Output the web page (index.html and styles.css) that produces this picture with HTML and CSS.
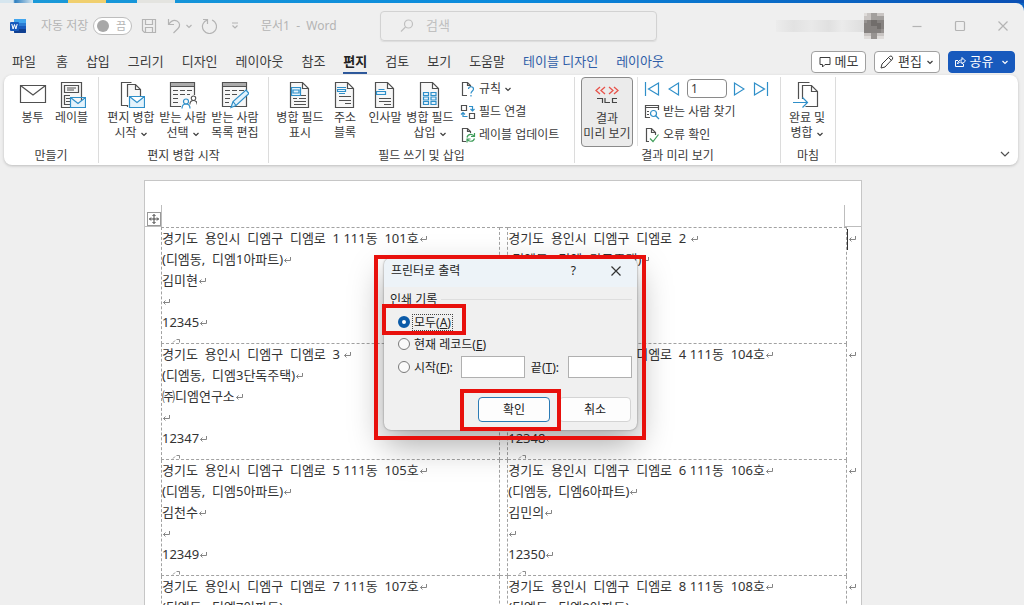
FILE: index.html
```html
<!DOCTYPE html>
<html lang="ko">
<head>
<meta charset="utf-8">
<meta name="viewport" content="width=device-width, initial-scale=1">
<title>문서1 - Word</title>
<link rel="stylesheet" href="styles.css">
</head>
<body>
<svg class="defs" aria-hidden="true">
  <symbol id="ret" viewBox="0 0 9 9"><path d="M7.500 1v3.500h-6M3.500 2.500l-2 2 2 2" fill="none" stroke="#858585"/></symbol>
  <symbol id="retcut" viewBox="0 0 9 5"><path d="M1 4.500l2-2M4.500 1.500h3v3" fill="none" stroke="#8d8d8d"/></symbol>
  <symbol id="chev" viewBox="0 0 8 8"><path d="M1.500 3l2.500 2.500L6.500 3" fill="none" stroke="currentColor" stroke-width="1.200"/></symbol>
  <symbol id="person" viewBox="0 0 10 11"><circle cx="5" cy="3.500" r="2.500"/><path d="M1 10.500c0-3 1.500-4.500 4-4.500s4 1.500 4 4.500"/></symbol>
</svg>

<div class="desktop"><span class="d1"></span><span class="d2"></span><span class="d3"></span></div>

<div class="app">
<header class="titlebar">
  <div class="quick">
    <svg class="logo" viewBox="0 0 16 16" width="16" height="16"><rect x="4" y="1" width="12" height="14" rx="1" fill="#2b7cd3"/><rect x="4" y="1" width="12" height="4" fill="#41a5ee"/><rect x="4" y="8" width="12" height="4" fill="#185abd"/><rect x="4" y="11" width="12" height="4" rx="1" fill="#103f91"/><rect y="4" width="9" height="9" rx="1" fill="#185abd"/><path d="M1.800 6l1.300 5 1.400-4.500L5.900 11l1.300-5" fill="none" stroke="#fff"/></svg>
    <label class="autosave" for="auto">자동 저장</label>
    <button class="switch" id="auto" type="button"><span class="knob"></span>끔</button>
    <button class="ico save" type="button" aria-label="저장"><svg viewBox="0 0 16 16" width="16" height="16"><path d="M1.500 1.500h13v13h-11l-2-2zM4.500 1.500v5h7v-5M4.500 14.500v-5h7v5"/></svg></button>
    <button class="ico undo" type="button" aria-label="실행 취소"><svg viewBox="0 0 14 16" width="14" height="16"><path d="M1.500 1v5.500H7M1.500 6.500C4 3 7 1.500 10 3c3 1.800 3.500 5 1 7.500L6.500 15"/></svg></button>
    <button class="ico uchev" type="button" aria-label="실행 취소 목록"><svg width="8" height="8"><use href="#chev"/></svg></button>
    <button class="ico redo" type="button" aria-label="다시 실행"><svg viewBox="0 0 16 16" width="16" height="16"><path d="M2 1.500h4.500V6M6.500 1.800A7 7 0 1 0 11 2"/></svg></button>
    <button class="ico more" type="button" aria-label="도구 모음 사용자 지정"><svg viewBox="0 0 8 8" width="8" height="8"><path d="M1 1h6M1.500 3.500L4 6l2.500-2.500"/></svg></button>
    <span class="docname">문서1&nbsp; -&nbsp; Word</span>
  </div>
  <div class="search">
    <svg viewBox="0 0 14 14" width="14" height="14"><circle cx="8.500" cy="5" r="4"/><path d="M5.500 8L1 12.500"/></svg>
    <input type="text" placeholder="검색" aria-label="검색">
  </div>
  <div class="win">
    <span class="username"></span>
    <svg class="avatar" viewBox="0 0 6 8" width="20" height="26" preserveAspectRatio="none" shape-rendering="crispEdges"><path fill="#c9c5c3" d="M0 0h6v8H0z"/><path fill="#a29f9d" d="M2 0h2v2H2zM4 1h2v1H4z"/><path fill="#868280" d="M0 2h6v4H0z"/><path fill="#716d6b" d="M2 2h2v2H2zM4 3h1v2H4z"/><path fill="#979391" d="M0 2h1v1H0zM5 5h1v1H5zM2 6h2v2H2z"/><path fill="#dfdcda" d="M0 0h1v1H0zM0 7h2v1H0zM4 7h2v1H4z"/></svg>
    <button class="ico wmin" type="button" aria-label="최소화"><svg viewBox="0 0 12 12" width="12" height="12"><path d="M1.500 6.500h9"/></svg></button>
    <button class="ico wmax" type="button" aria-label="최대화"><svg viewBox="0 0 12 12" width="12" height="12"><rect x="1.500" y="1.500" width="9" height="9" rx="1"/></svg></button>
    <button class="ico wcls" type="button" aria-label="닫기"><svg viewBox="0 0 12 12" width="12" height="12"><path d="M1.500 1.500l9 9M10.500 1.500l-9 9"/></svg></button>
  </div>
</header>

<nav class="tabs">
  <button class="tab file" type="button">파일</button><button class="tab" type="button">홈</button><button class="tab" type="button">삽입</button><button class="tab" type="button">그리기</button><button class="tab" type="button">디자인</button><button class="tab" type="button">레이아웃</button><button class="tab" type="button">참조</button><button class="tab on" type="button">편지</button><button class="tab" type="button">검토</button><button class="tab" type="button">보기</button><button class="tab" type="button">도움말</button><button class="tab ctx" type="button">테이블 디자인</button><button class="tab ctx" type="button">레이아웃</button>
  <div class="actions">
    <button class="act memo" type="button"><svg viewBox="0 0 12 12" width="12" height="12"><path d="M1 1.500h10v7H6L3.500 11V8.500H1z"/></svg>메모</button>
    <button class="act edit" type="button"><svg viewBox="0 0 14 14" width="14" height="14"><path d="M1 13l1-4L9.500 1.500q1.500-1 2.500 0t.5 2.500L5 12zM8.500 2.500l3 3"/></svg>편집<svg class="c" width="8" height="8"><use href="#chev"/></svg></button>
    <button class="act share" type="button"><svg viewBox="0 0 12 12" width="12" height="12"><path d="M4 4.500H1.500v6h8V8M3.500 8C4 5 5.500 4 8 4V1.500L11.500 5 8 8V6C6 6 4.500 6.500 3.500 8z"/></svg>공유<svg class="c" width="8" height="8"><use href="#chev"/></svg></button>
  </div>
</nav>

<section class="ribbon">
  <div class="group g1">
    <div class="tools">
      <button class="big w-m" type="button"><svg viewBox="0 0 28 28" width="28" height="28"><path class="k" d="M1.500 4.500h25v17h-25zM1.500 4.500L14 14 26.500 4.500"/></svg>봉투</button>
      <button class="big w-m" type="button"><svg viewBox="0 0 28 28" width="28" height="28"><path class="k lite" d="M3.500 1.500h20v25h-20z"/><path class="k" d="M6.500 4.500h14v7h-14zM9 7h9M9 9h7M12 14.500H6.500v9H12M8 17.500h4M8 20.500h4"/><path class="b bf" d="M12.500 16.500h15v10h-15zM12.500 16.500l7.500 6 7.500-6"/></svg>레이블</button>
    </div>
    <div class="gname">만들기</div>
  </div>
  <div class="group g2">
    <div class="tools">
      <button class="big w-l" type="button"><svg viewBox="0 0 28 28" width="28" height="28"><path class="k" d="M10 24.500H4.500v-23h10"/><path class="k lite" d="M10.500 16V3.500h8l5 5V16M18.500 3.500v5h5M10.500 24v2"/><path class="b bf" d="M12.500 15.500h15v11h-15zM12.500 15.500l7.500 6 7.500-6"/></svg><span>편지 병합<br>시작<svg class="c" width="8" height="8"><use href="#chev"/></svg></span></button>
      <button class="big w-l" type="button"><svg viewBox="0 0 28 28" width="28" height="28"><path class="k lite" d="M12 25.500H1.500v-24h24V14"/><path fill="#aaa" d="M2 2h23v3H2z"/><path class="k" d="M1.500 5.500h24M4 9.500h5M11 9.500h5M18 9.500h5M4 13.500h5M11 13.500h5M18 13.500h3M4 17.500h5M4 21.500h5"/><use href="#person" class="b" x="12" y="17" width="10" height="11"/><use href="#person" class="k" x="20" y="14" width="9" height="10"/></svg><span>받는 사람<br>선택<svg class="c" width="8" height="8"><use href="#chev"/></svg></span></button>
      <button class="big w-l" type="button"><svg viewBox="0 0 28 28" width="28" height="28"><path class="k lite" d="M1.500 1.500h24v24h-24z"/><path fill="#aaa" d="M2 2h23v3H2z"/><path class="k" d="M1.500 5.500h24M4 9.500h5M11 9.500h5M18 9.500h5M4 13.500h5M11 13.500h5M4 17.500h5M4 21.500h4"/><path class="b bf" d="M10 26.500l2-6L25 9l3 3.500-13 12zM12 20.500l3 4"/></svg><span>받는 사람<br>목록 편집</span></button>
    </div>
    <div class="gname">편지 병합 시작</div>
  </div>
  <div class="group g3">
    <div class="tools">
      <button class="big w-f1" type="button"><svg viewBox="0 0 28 28" width="28" height="28"><path class="k lite" d="M4.500 1.500h12l6 6v19h-18zM16.500 1.500v6h6"/><path class="k" d="M7 17.500h4M13 14.500h7M13 17.500h7M8 20.500h12M8 23.500h12"/><path class="b bf" d="M5.500 6.500h9v8h-9zM7 9h6v3H7z"/></svg><span>병합 필드<br>표시</span></button>
      <button class="big w-f2" type="button"><svg viewBox="0 0 28 28" width="28" height="28"><path class="k lite" d="M4.500 1.500h12l6 6v19h-18zM16.500 1.500v6h6"/><path class="k" d="M8 15.500h12M8 19.500h12M14 22.500h6"/><path class="b bf" d="M6 6.500h9M6.500 8.500h8v2h-8zM8 12.500h6"/></svg><span>주소<br>블록</span></button>
      <button class="big w-f3" type="button"><svg viewBox="0 0 28 28" width="28" height="28"><path class="k lite" d="M4.500 1.500h12l6 6v19h-18zM16.500 1.500v6h6"/><path class="k" d="M8 17.500h12M8 20.500h12M13 23.500h7"/><path class="b bf" d="M7.500 8.500h6M5.500 10.500h9v3h-9z"/></svg><span>인사말</span></button>
      <button class="big w-l" type="button"><svg viewBox="0 0 28 28" width="28" height="28"><path class="k lite" d="M4.500 1.500h12l6 6v19h-18zM16.500 1.500v6h6"/><path class="b bf" d="M7.500 11.500h5v3h-5zM15 11.500h5v3h-5zM7.500 16h5v3h-5zM15 16h5v3h-5zM7.500 20.500h5v3h-5zM15 20.500h5v3h-5z"/></svg><span>병합 필드<br>삽입<svg class="c" width="8" height="8"><use href="#chev"/></svg></span></button>
      <div class="list">
        <button class="small" type="button"><svg viewBox="0 0 16 16" width="16" height="16"><path class="k" d="M7 14.500H2.500v-13h5l3 3V6M7.500 1.500v3h3"/><path class="b" d="M8.500 8c0-3 5-3 5 0 0 2-2.500 2-2.500 4.500M11 14v1.500"/></svg>규칙<svg class="c" width="8" height="8"><use href="#chev"/></svg></button>
        <button class="small" type="button"><svg viewBox="0 0 16 16" width="16" height="16"><path class="k" d="M1.500 1.500h5v5h-5zM9.500 9.500h5v5h-5z"/><path class="b" d="M9 2.500h3.500V7M10.500 5l2 2 2-2M3 9v3.500h4.500M1 10.500l2-2 2 2"/></svg>필드 연결</button>
        <button class="small" type="button"><svg viewBox="0 0 16 16" width="16" height="16"><path class="k" d="M6 14.500H2.500v-13h5l3 3V6M7.500 1.500v3h3"/><path class="g" d="M7 10.500c1-4 6-4 7-1M14.500 6v3.500H11M14.500 11.500c-1 3.500-6 3.500-7 1M7 15.500V12h3.500"/></svg>레이블 업데이트</button>
      </div>
    </div>
    <div class="gname">필드 쓰기 및 삽입</div>
  </div>
  <div class="group g4">
    <div class="tools">
      <button class="big preview" type="button"><svg viewBox="0 0 28 28" width="28" height="28"><path d="M7 5L3 8.500 7 12M12 5L8 8.500 12 12M16 5l4 3.500-4 3.500M21 5l4 3.500-4 3.500" fill="none" stroke="#e8534b" stroke-width="1.300"/><path d="M4 16.500h5.500V21M12 16v4.500h5M24 16.500h-4.500v4H24" fill="none" stroke="#444" stroke-width="1.200"/></svg><span>결과<br>미리 보기</span></button>
      <div class="list records">
        <div class="nav">
          <button type="button" aria-label="처음"><svg viewBox="0 0 16 16" width="16" height="16"><path class="b" d="M1.500 1v14M14.500 2v12L4.500 8z"/></svg></button>
          <button class="n2" type="button" aria-label="이전"><svg viewBox="0 0 12 16" width="12" height="16"><path class="b" d="M10.500 2v12L1 8z"/></svg></button>
          <input type="text" value="1" aria-label="레코드">
          <button class="n3" type="button" aria-label="다음"><svg viewBox="0 0 12 16" width="12" height="16"><path class="b" d="M1.500 2v12L11 8z"/></svg></button>
          <button type="button" aria-label="마지막"><svg viewBox="0 0 16 16" width="16" height="16"><path class="b" d="M14.500 1v14M1.500 2v12L11.500 8z"/></svg></button>
        </div>
        <button class="small" type="button"><svg viewBox="0 0 16 16" width="16" height="16"><path class="k" d="M6 13.500H1.500v-12h13V6M1.500 3.500h13M3 7.500h2M3 10.500h2"/><circle class="b" cx="9.500" cy="9.500" r="3"/><path class="b" d="M11.500 11.500l3.500 3.500"/></svg>받는 사람 찾기</button>
        <button class="small" type="button"><svg viewBox="0 0 16 16" width="16" height="16"><path class="k" d="M5 14.500H2.500v-13h5l4 4V8M7.500 1.500v4h4"/><path class="g" d="M6 11.500l3 3 5.500-7"/></svg>오류 확인</button>
      </div>
    </div>
    <div class="gname">결과 미리 보기</div>
  </div>
  <div class="group g5">
    <div class="tools">
      <button class="big w-l" type="button"><svg viewBox="0 0 28 28" width="28" height="28"><path class="k" d="M5.500 18V1.500h11M9.500 18V4.500h9l6 6v15h-12M18.500 4.500v6h6"/><path class="b" d="M0 21.500h14M9.500 16.500l5 5-5 5"/></svg><span>완료 및<br>병합<svg class="c" width="8" height="8"><use href="#chev"/></svg></span></button>
    </div>
    <div class="gname">마침</div>
  </div>
  <button class="collapse" type="button" aria-label="리본 축소"><svg viewBox="0 0 10 10" width="10" height="10"><path class="k" d="M1 3l4 4 4-4"/></svg></button>
</section>

<main class="canvas">
  <div class="page">
    <div class="marks">
      <div class="corner left"><svg viewBox="0 0 14 14" width="14" height="14"><rect x=".5" y=".5" width="13" height="13" fill="#fff" stroke="#999"/><path d="M7 2.500v9M2.500 7h9M5.500 4L7 2.500 8.500 4M5.500 10L7 11.500 8.500 10M4 5.500L2.500 7 4 8.500M10 5.500L11.500 7 10 8.500" fill="none" stroke="#444"/></svg></div>
      <div class="corner right"></div>
    </div>
    <table class="labels">
      <tr>
        <td><div class="cell"><p>경기도  용인시  디엠구  디엠로  1 111동  101호<svg><use href="#ret"/></svg></p><p>(디엠동,  디엠1아파트)<svg><use href="#ret"/></svg></p><p>김미현<svg><use href="#ret"/></svg></p><p><svg><use href="#ret"/></svg></p><p>12345<svg><use href="#ret"/></svg></p><svg class="cut"><use href="#retcut"/></svg></div></td>
        <td class="gap"></td>
        <td><div class="cell"><p>경기도  용인시  디엠구  디엠로  2 <svg><use href="#ret"/></svg></p><p>(디엠동,  디엠2단독주택)<svg><use href="#ret"/></svg></p><p></p><p></p><p></p><svg class="cut"><use href="#retcut"/></svg></div></td>
        <td class="end caret"><svg><use href="#ret"/></svg></td>
      </tr>
      <tr>
        <td><div class="cell"><p>경기도  용인시  디엠구  디엠로  3 <svg><use href="#ret"/></svg></p><p>(디엠동,  디엠3단독주택)<svg><use href="#ret"/></svg></p><p>㈜디엠연구소<svg><use href="#ret"/></svg></p><p><svg><use href="#ret"/></svg></p><p>12347<svg><use href="#ret"/></svg></p><svg class="cut"><use href="#retcut"/></svg></div></td>
        <td class="gap"></td>
        <td><div class="cell"><p>경기도  용인시  디엠구  디엠로  4 111동  104호<svg><use href="#ret"/></svg></p><p></p><p></p><p></p><p>12348<svg><use href="#ret"/></svg></p><svg class="cut"><use href="#retcut"/></svg></div></td>
        <td class="end"><svg><use href="#ret"/></svg></td>
      </tr>
      <tr>
        <td><div class="cell"><p>경기도  용인시  디엠구  디엠로  5 111동  105호<svg><use href="#ret"/></svg></p><p>(디엠동,  디엠5아파트)<svg><use href="#ret"/></svg></p><p>김천수<svg><use href="#ret"/></svg></p><p><svg><use href="#ret"/></svg></p><p>12349<svg><use href="#ret"/></svg></p><svg class="cut"><use href="#retcut"/></svg></div></td>
        <td class="gap"></td>
        <td><div class="cell"><p>경기도  용인시  디엠구  디엠로  6 111동  106호<svg><use href="#ret"/></svg></p><p>(디엠동,  디엠6아파트)<svg><use href="#ret"/></svg></p><p>김민의<svg><use href="#ret"/></svg></p><p><svg><use href="#ret"/></svg></p><p>12350<svg><use href="#ret"/></svg></p><svg class="cut"><use href="#retcut"/></svg></div></td>
        <td class="end"><svg><use href="#ret"/></svg></td>
      </tr>
      <tr>
        <td><div class="cell"><p>경기도  용인시  디엠구  디엠로  7 111동  107호<svg><use href="#ret"/></svg></p><p>(디엠동,  디엠7아파트)<svg><use href="#ret"/></svg></p></div></td>
        <td class="gap"></td>
        <td><div class="cell"><p>경기도  용인시  디엠구  디엠로  8 111동  108호<svg><use href="#ret"/></svg></p><p>(디엠동,  디엠8아파트)<svg><use href="#ret"/></svg></p></div></td>
        <td class="end"><svg><use href="#ret"/></svg></td>
      </tr>
    </table>

    <form class="dialog">
      <div class="dhead"><span class="dtitle">프린터로 출력</span><button type="button" aria-label="도움말">?</button><button type="button" aria-label="닫기"><svg viewBox="0 0 12 12" width="12" height="12"><path d="M1.500 1.500l9 9M10.500 1.500l-9 9" fill="none" stroke="#333" stroke-width="1.200"/></svg></button></div>
      <fieldset>
        <legend>인쇄 기록</legend>
        <div class="opt"><input type="radio" name="rec" id="ra" checked><label class="focus" for="ra">모두(<u>A</u>)</label></div>
        <div class="opt"><input type="radio" name="rec" id="re"><label for="re">현재 레코드(<u>E</u>)</label></div>
        <div class="opt range"><input type="radio" name="rec" id="rf"><label for="rf">시작(<u>F</u>):</label><input type="text" aria-label="시작"><label class="to" for="rt">끝(<u>T</u>):</label><input type="text" id="rt"></div>
      </fieldset>
      <div class="dfoot"><button class="ok" type="button">확인</button><button type="button">취소</button></div>
    </form>
    <div class="hl hl-dialog"></div>
    <div class="hl hl-all"></div>
    <div class="hl hl-ok"></div>
  </div>
</main>
</div>
</body>
</html>
```
FILE: styles.css
```css
* { box-sizing: border-box; }
body {
  margin: 0;
  height: 100vh;
  overflow: hidden;
  display: flex;
  flex-direction: column;
  background: #0a63c4;
  color: #3b3b3b;
  font: 12px/15px "Noto Sans", "Noto Sans CJK KR", sans-serif;
}
button, input { font: inherit; color: inherit; margin: 0; }
button { padding: 0; border: 0; background: none; white-space: nowrap; }
.defs { position: absolute; width: 0; height: 0; }
svg { display: block; flex: none; }

.desktop {
  height: 3px;
  flex: none;
  display: flex;
  background: linear-gradient(90deg, #1b9ad8, #0a8adc 50%, #0a4fb4);
}
.d1 { width: 33px; background: linear-gradient(90deg, #d6e6ef 40%, #2d7fc0 45%, #d6e6ef); }
.d2 { width: 38px; margin-left: 35px; background: #f0cf6e; }
.d3 { width: 38px; margin-left: 31px; background: #e4e4e0; }

.app {
  flex: 1;
  min-height: 0;
  display: flex;
  flex-direction: column;
  background: #efefef;
  border-radius: 0 8px 0 0;
}

/* Title bar */
.titlebar {
  height: 45px;
  flex: none;
  display: grid;
  grid-template-columns: 380px minmax(0, 277px) 1fr;
  align-items: center;
  color: #b4b4b4;
}
.quick { display: flex; align-items: center; padding-left: 10px; }
.autosave { margin-left: 15px; width: 52px; }
.switch {
  width: 39px;
  height: 18px;
  display: flex;
  align-items: center;
  gap: 7px;
  padding-left: 3px;
  border: 1px solid #bdbdbd;
  border-radius: 9px;
  background: #fff;
  font-size: 11px;
}
.knob { width: 12px; height: 12px; border-radius: 50%; background: #a8a8a8; }
.ico svg { fill: none; stroke: #b4b4b4; stroke-width: 1.2; }
.save { margin-left: 9px; }
.undo { margin-left: 10px; }
.uchev { margin-left: 4px; }
.redo { margin-left: 8px; }
.more { margin-left: 14px; }
.docname { margin-left: 22px; }
.search {
  height: 30px;
  display: flex;
  align-items: center;
  gap: 12px;
  padding-left: 19px;
  border: 1px solid #d2d2d2;
  border-radius: 4px;
  box-shadow: 0 1px 1px #dcdcdc;
}
.search svg { fill: none; stroke: #c0c0c0; stroke-width: 1.2; }
.search input { flex: 1; min-width: 0; border: 0; padding: 0; background: none; font-size: 13px; }
.search input::placeholder { color: #c0c0c0; }
.win { display: flex; align-items: center; justify-content: flex-end; padding-right: 15px; }
.username {
  width: 88px;
  height: 12px;
  background: linear-gradient(90deg, #ececec, #e2e2e2 20%, #e9e9e9 40%, #e0e0e0 60%, #ebebeb 75%, #dedede);
}
.wmin { margin-left: 27px; }
.wmax { margin-left: 31px; }
.wcls { margin-left: 31px; }

/* Tabs */
.tabs { height: 27px; flex: none; display: flex; align-items: center; gap: 18px; padding: 0 9px 0 12px; font-size: 13px; }
.tab { height: 24px; padding: 2px 0 0; border-bottom: 2px solid transparent; }
.file { margin-right: 2px; }
.tab.on { color: #222; font-weight: 600; border-color: #2b579a; }
.ctx { color: #2f5ea8; }
.actions { margin-left: auto; display: flex; align-items: center; gap: 8px; }
.act {
  height: 22px;
  display: flex;
  align-items: center;
  justify-content: center;
  gap: 4px;
  border: 1px solid #a0a0a0;
  border-radius: 4px;
  background: #fff;
}
.act svg { fill: none; stroke: currentColor; }
.memo { width: 55px; }
.edit { width: 66px; }
.share { width: 67px; border-color: #185abd; background: #185abd; color: #fff; }
.share .c { margin-left: 4px; }

/* Ribbon */
.ribbon {
  flex: none;
  display: flex;
  margin: 0 6px 0 4px;
  padding: 2px 0;
  border-radius: 8px;
  background: #fff;
  box-shadow: 0 1px 3px #bdbdbd;
}
.group {
  display: flex;
  flex-direction: column;
  height: 86px;
  border-right: 1px solid #dcdcdc;
}
.tools { flex: 1; display: flex; align-items: flex-start; }
.gname { text-align: center; line-height: 15px; }
.g1 { width: 95px; }
.g1 .tools { padding-left: 9px; }
.g2 { width: 170px; }
.g2 .tools { padding-left: 6px; }
.g3 { width: 306px; }
.g3 .tools { padding-left: 7px; }
.g4 { width: 206px; }
.g4 .tools { padding-left: 6px; }
.g5 { width: 55px; }
.big {
  display: flex;
  flex-direction: column;
  align-items: center;
  padding-top: 4px;
  gap: 1px;
  height: 70px;
}
.big .c { display: inline-block; vertical-align: middle; margin-left: 3px; }
.w-m { width: 39px; }
.w-l { width: 52px; }
.w-f1 { width: 48px; }
.w-f2 { width: 42px; }
.w-f3 { width: 38px; }
.k, .b, .g { fill: none; stroke: #505050; stroke-width: 1.2; }
.lite { fill: #f7f7f7; }
.b { stroke: #2f8fc9; }
.bf { fill: #e4f3fc; }
.g { stroke: #3f9d5a; }
.list { display: flex; flex-direction: column; align-items: flex-start; margin-left: 4px; }
.small, .nav { height: 23px; display: flex; align-items: center; gap: 3px; }
.preview { width: 52px; border: 1px solid #8a8a8a; border-radius: 4px; background: #ebebeb; }
.records { margin-left: 4px; padding-left: 6px; border-left: 1px solid #e2e2e2; }
.nav { gap: 8px; }
.nav input { width: 40px; height: 19px; padding: 0 3px; border: 1px solid #8a8a8a; border-radius: 4px; }
.nav .n2 { margin-right: -1px; }
.nav .n3 { margin-left: -2px; }
.collapse { margin: auto 8px 4px auto; }

/* Document */
.canvas { flex: 1; min-height: 0; overflow: hidden; padding: 15px 18px 0 0; }
.page {
  position: relative;
  max-width: 718px;
  min-height: 100%;
  margin: 0 auto;
  border: 1px solid #c6c6c6;
  border-bottom: 0;
  background: #fff;
}
.marks { height: 46px; display: flex; align-items: flex-end; justify-content: space-between; }
.corner { height: 22px; border: 0 solid #bdbdbd; border-bottom-width: 1px; }
.corner.left { width: 17px; border-right-width: 1px; display: flex; align-items: flex-end; justify-content: flex-end; }
.corner.right { width: 17px; border-left-width: 1px; }
.labels { width: calc(100% - 16px); margin-left: 16px; border-collapse: collapse; table-layout: fixed; }
.labels td { height: 116px; padding: 0; vertical-align: top; border: 1px dashed #a2a2a2; }
.labels .gap { width: 8px; }
.labels .end { width: 15px; border: 0; border-left: 1px dashed #a2a2a2; padding: 7px 0 0 1px; }
.labels .caret { background: linear-gradient(#333, #333) 0 1px / 1px 21px no-repeat; }
.end svg { width: 9px; height: 9px; }
.cell { height: 115px; overflow: hidden; font-size: 13px; color: #333; }
.cell p { margin: 0; height: 21px; line-height: 21px; white-space: pre; }
.cell p svg { display: inline-block; width: 9px; height: 9px; vertical-align: middle; }
.cell .cut { width: 9px; height: 5px; margin: 5px 0 0 10px; }

/* Print dialog */
.dialog {
  position: absolute;
  left: 239px;
  top: 77px;
  width: 253px;
  height: 172px;
  border-radius: 7px;
  background: #f0f0f0;
  box-shadow: 0 0 2px #777, 0 14px 34px rgba(0, 0, 0, .35);
  color: #222;
}
.dhead { height: 29px; display: flex; align-items: center; padding: 0 15px 4px 7px; border-radius: 7px 7px 0 0; background: #edf3f8; }
.dtitle { flex: 1; }
.dhead button { margin-left: 34px; }
.dialog fieldset { margin: 0; padding: 2px 5px 0 14px; border: 0; }
.dialog legend { display: flex; align-items: center; gap: 4px; width: calc(100% + 8px); margin: 5px 0 0 -8px; padding: 5px 0 0; }
.dialog legend::after { content: ""; flex: 1; border-top: 1px solid #dedede; }
.opt { height: 22px; display: flex; align-items: center; margin-top: 2px; }
.opt + .opt { margin-top: 0; }
.opt input[type="radio"] {
  appearance: none;
  width: 12px;
  height: 12px;
  margin-right: 3px;
  border: 1px solid #7a7a7a;
  border-radius: 50%;
  background: #fafafa;
}
.opt input[type="radio"]:checked { border: 4px solid #0a5aa8; background: #fff; }
.opt label { padding: 0 1px; }
.focus { outline: 1px dotted #444; }
.opt input[type="text"] { width: 64px; height: 22px; border: 1px solid #b0b0b0; background: #fff; }
.range { justify-content: space-between; height: 24px; }
.range label { flex: 1; }
.range .to { flex: none; margin: 0 8px 0 5px; }
.dfoot { display: flex; justify-content: flex-end; gap: 9px; padding: 18px 6px 0 0; }
.dfoot button { width: 72px; height: 25px; border: 1px solid #d4d4d4; border-radius: 4px; background: #fdfdfd; }
.dfoot .ok { border-color: #2a7ab5; }

/* Callout frames drawn over the dialog */
.hl { position: absolute; border: 4px solid #e8100c; pointer-events: none; }
.hl-dialog { left: 229px; top: 74px; width: 272px; height: 185px; }
.hl-all { left: 237px; top: 123px; width: 84px; height: 31px; }
.hl-ok { left: 315px; top: 208px; width: 101px; height: 42px; }
```
